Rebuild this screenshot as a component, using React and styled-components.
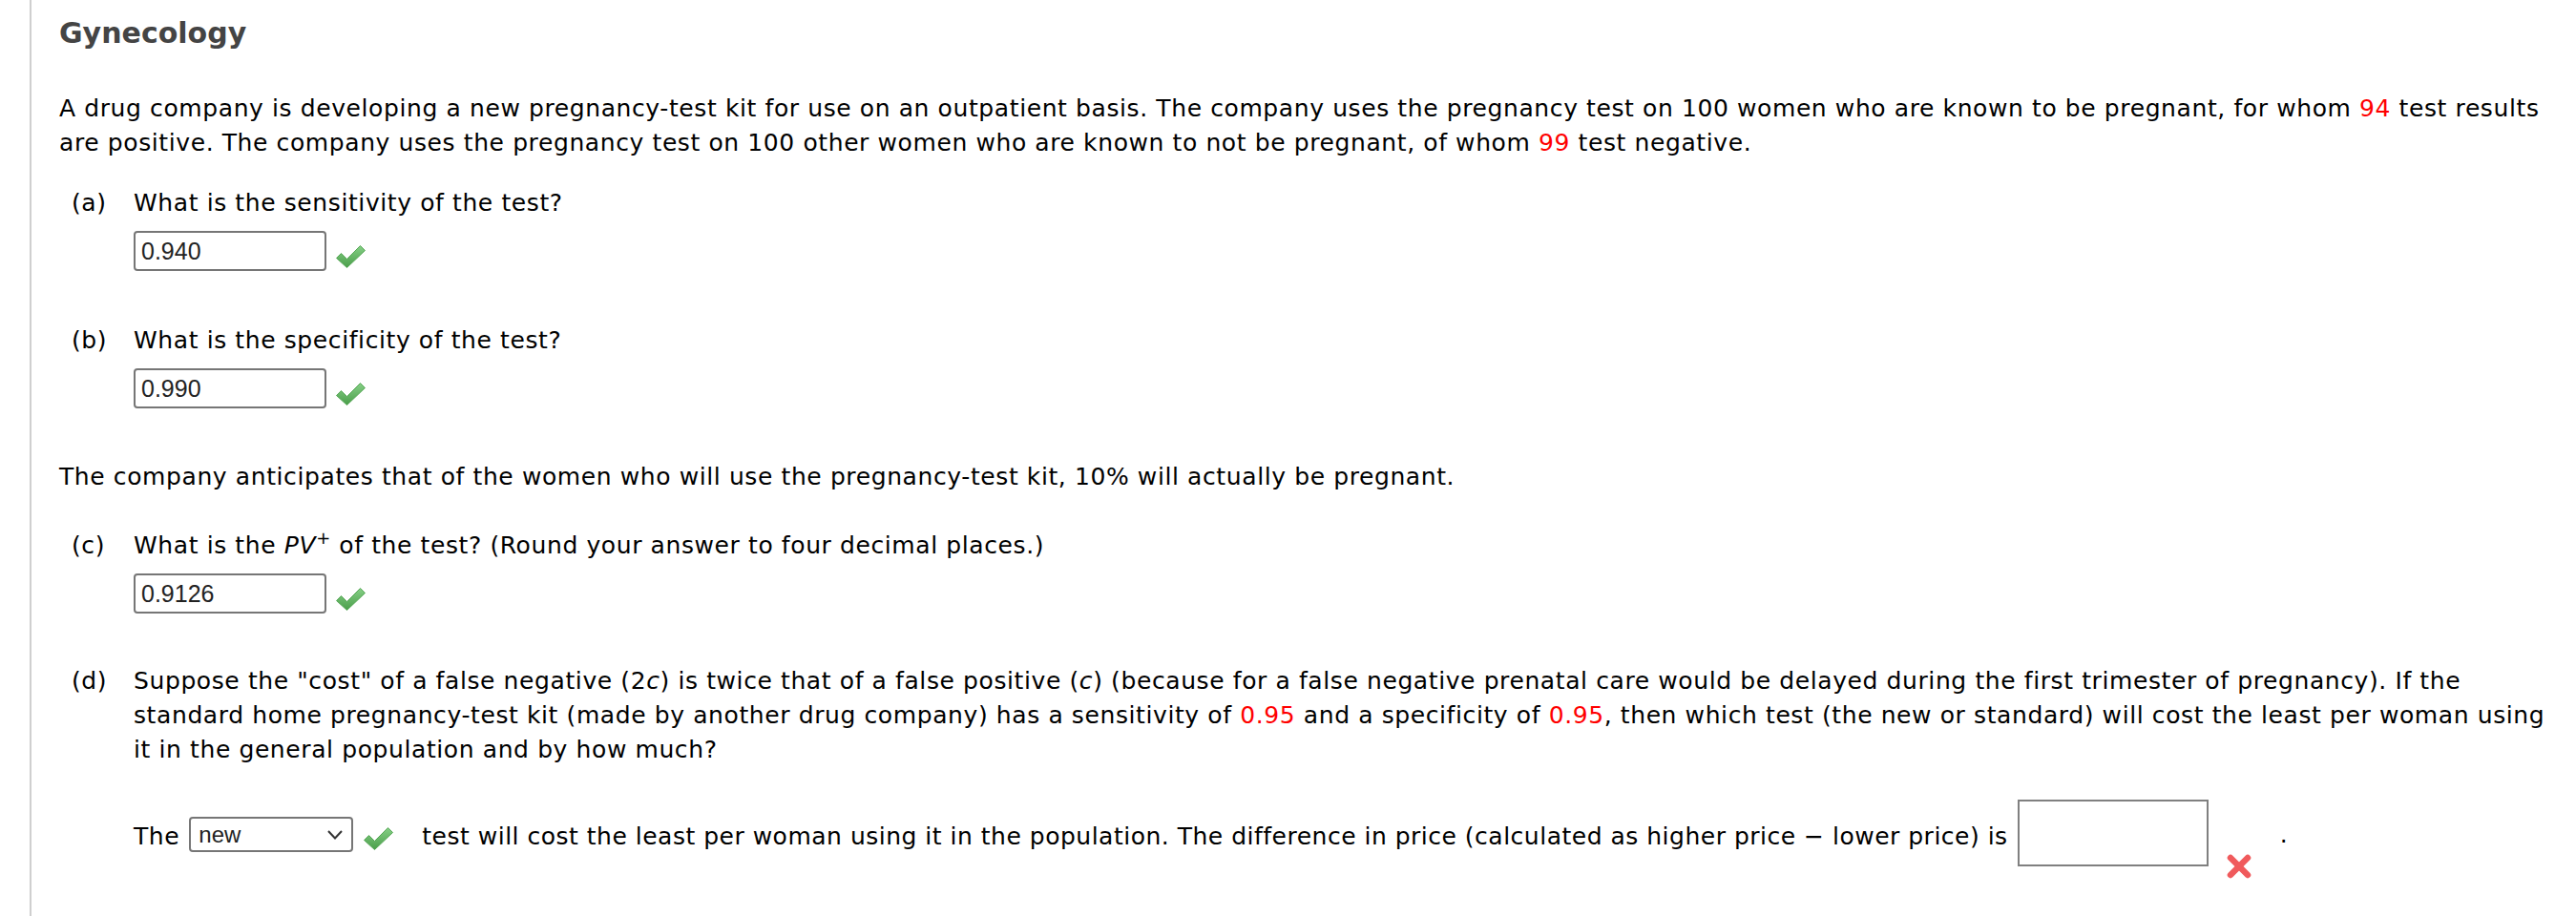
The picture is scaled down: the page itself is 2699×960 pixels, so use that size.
import React from 'react';
import styled, { createGlobalStyle } from 'styled-components';

const Global = createGlobalStyle`
  html, body { margin: 0; padding: 0; background: #fff; }
  body { font-family: "DejaVu Sans", Verdana, sans-serif; color: #000; }
`;

const Page = styled.div`
  margin-left: 31px;
  border-left: 2px solid #cfcfcf;
  min-height: 960px;
  box-sizing: border-box;
  padding: 17px 0 0 29px;
  font-size: 25px;
  letter-spacing: 0.6px;
  line-height: 36px;
`;

const Title = styled.h1`
  margin: 0;
  font-size: 30px;
  line-height: 36px;
  letter-spacing: 0;
  font-weight: bold;
  color: #444;
`;

const Para = styled.p`
  margin: ${(p) => p.$mt || 0}px 0 0;
  white-space: nowrap;
`;

const Red = styled.span`
  color: #ff0000;
`;

const Sup = styled.sup`
  font-size: 0.72em;
  line-height: 0;
  vertical-align: 0.55em;
`;

const Part = styled.div`
  display: grid;
  grid-template-columns: 65px auto;
  margin-top: ${(p) => p.$mt}px;
  padding-left: 13px;
`;

const PartLabel = styled.div``;

const PartBody = styled.div`
  white-space: nowrap;
`;

const AnswerRow = styled.div`
  display: flex;
  align-items: flex-end;
  margin-top: 11px;
`;

const NumBox = styled.div`
  width: 202px;
  height: 42px;
  box-sizing: border-box;
  border: 2px solid #767676;
  border-radius: 4px;
  padding-left: 6px;
  display: flex;
  align-items: center;
  font-family: "Liberation Sans", Arial, sans-serif;
  font-size: 25px;
  letter-spacing: 0;
  color: #222;
`;

const CheckWrap = styled.span`
  display: inline-flex;
  margin-left: ${(p) => p.$ml || 10}px;
  margin-bottom: ${(p) => p.$mb || 0}px;
  margin-top: ${(p) => p.$mt || 0}px;
`;

const FinalRow = styled.div`
  display: flex;
  align-items: flex-start;
  margin-top: 34px;
  white-space: nowrap;
`;

const RowText = styled.span`
  margin-top: 21px;
  margin-left: ${(p) => p.$ml || 0}px;
  letter-spacing: ${(p) => p.$ls ?? 0.6}px;
`;

const Select = styled.div`
  width: 172px;
  height: 37px;
  box-sizing: border-box;
  margin-top: 18px;
  margin-left: 10px;
  border: 2px solid #767676;
  border-radius: 4px;
  padding: 0 9px 0 8px;
  display: flex;
  align-items: center;
  justify-content: space-between;
  font-family: "Liberation Sans", Arial, sans-serif;
  font-size: 24px;
  letter-spacing: 0;
  color: #222;
`;

const BigBox = styled.div`
  width: 200px;
  height: 70px;
  box-sizing: border-box;
  margin-left: 10px;
  border: 2px solid #808080;
  background: #fff;
`;

const XWrap = styled.span`
  display: inline-flex;
  margin-left: 19px;
  margin-top: 57px;
`;

const Period = styled.span`
  margin-top: 19px;
  margin-left: 30px;
`;

const Check = () => (
  <svg width="31" height="26" viewBox="0 0 31 26">
    <defs>
      <linearGradient id="cg" x1="0" y1="0" x2="0" y2="1">
        <stop offset="0" stopColor="#86cf86" />
        <stop offset="1" stopColor="#4a9e4a" />
      </linearGradient>
    </defs>
    <path d="M0.5 15.5 L5.5 10.5 L11.5 16.5 L25.5 2.5 L30.5 7.5 L11.5 25.5 Z" fill="url(#cg)" stroke="#58a858" strokeWidth="1" strokeLinejoin="round" />
  </svg>
);

const Cross = () => (
  <svg width="26" height="26" viewBox="0 0 26 26">
    <g stroke="#f05a5c" strokeWidth="6.5" strokeLinecap="round">
      <line x1="4" y1="4" x2="22" y2="22" />
      <line x1="22" y1="4" x2="4" y2="22" />
    </g>
  </svg>
);

const Chevron = () => (
  <svg width="16" height="10" viewBox="0 0 16 10">
    <polyline points="1,1 8,8.5 15,1" fill="none" stroke="#333" strokeWidth="2" />
  </svg>
);

export default function App() {
  return (
    <>
      <Global />
      <Page>
        <Title>Gynecology</Title>
        <Para $mt={43}>
          A drug company is developing a new pregnancy-test kit for use on an outpatient basis. The company uses the pregnancy test on 100 women who are known to be pregnant, for whom <Red>94</Red> test results
          <br />
          are positive. The company uses the pregnancy test on 100 other women who are known to not be pregnant, of whom <Red>99</Red> test negative.
        </Para>

        <Part $mt={27}>
          <PartLabel>(a)</PartLabel>
          <PartBody>
            What is the sensitivity of the test?
            <AnswerRow>
              <NumBox>0.940</NumBox>
              <CheckWrap $mb={3}><Check /></CheckWrap>
            </AnswerRow>
          </PartBody>
        </Part>

        <Part $mt={55}>
          <PartLabel>(b)</PartLabel>
          <PartBody>
            What is the specificity of the test?
            <AnswerRow>
              <NumBox>0.990</NumBox>
              <CheckWrap $mb={3}><Check /></CheckWrap>
            </AnswerRow>
          </PartBody>
        </Part>

        <Para $mt={54}>
          The company anticipates that of the women who will use the pregnancy-test kit, 10% will actually be pregnant.
        </Para>

        <Part $mt={36}>
          <PartLabel>(c)</PartLabel>
          <PartBody>
            What is the <i>PV</i><Sup>+</Sup> of the test? (Round your answer to four decimal places.)
            <AnswerRow>
              <NumBox>0.9126</NumBox>
              <CheckWrap $mb={3}><Check /></CheckWrap>
            </AnswerRow>
          </PartBody>
        </Part>

        <Part $mt={53}>
          <PartLabel>(d)</PartLabel>
          <PartBody>
            Suppose the "cost" of a false negative (2<i>c</i>) is twice that of a false positive (<i>c</i>) (because for a false negative prenatal care would be delayed during the first trimester of pregnancy). If the
            <br />
            standard home pregnancy-test kit (made by another drug company) has a sensitivity of <Red>0.95</Red> and a specificity of <Red>0.95</Red>, then which test (the new or standard) will cost the least per woman using
            <br />
            it in the general population and by how much?
            <FinalRow>
              <RowText>The</RowText>
              <Select>
                <span>new</span>
                <Chevron />
              </Select>
              <CheckWrap $ml={11} $mt={27}><Check /></CheckWrap>
              <RowText $ml={30} $ls={0.5}>
                test will cost the least per woman using it in the population. The difference in price (calculated as higher price − lower price) is
              </RowText>
              <BigBox />
              <XWrap><Cross /></XWrap>
              <Period>.</Period>
            </FinalRow>
          </PartBody>
        </Part>
      </Page>
    </>
  );
}
